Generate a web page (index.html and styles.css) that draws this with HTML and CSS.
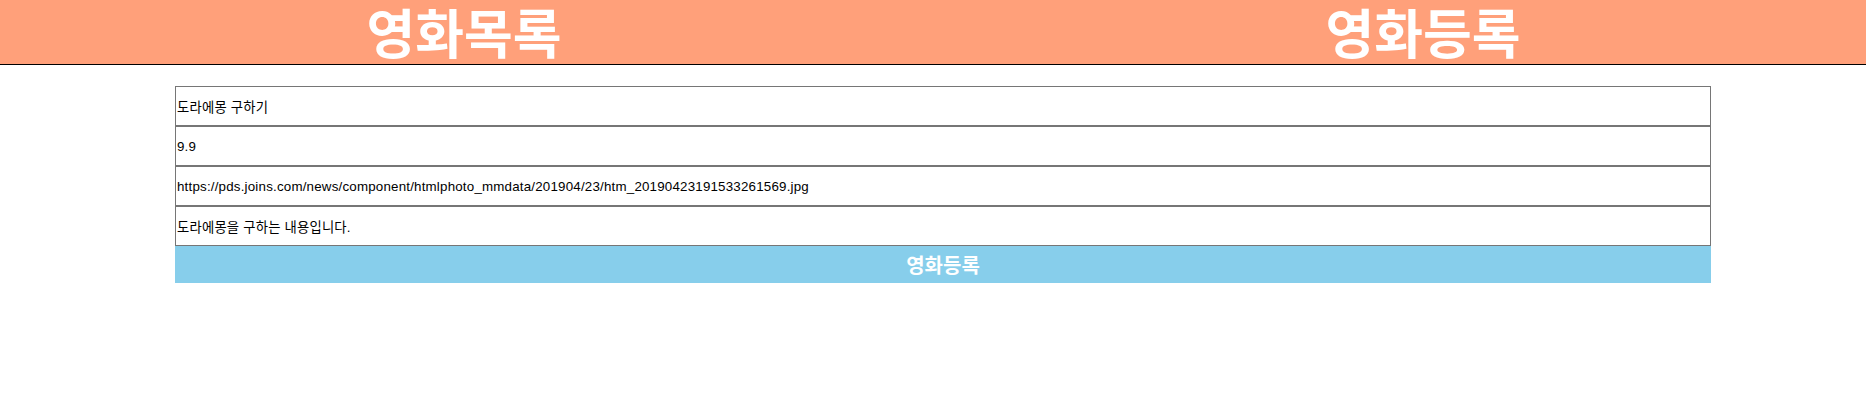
FILE: index.html
```html
<!DOCTYPE html>
<html lang="ko">
<head>
<meta charset="utf-8">
<title>영화등록</title>
<link rel="stylesheet" href="styles.css">
</head>
<body>
<header class="nav">
  <a class="nav-link" href="#">영화목록</a>
  <a class="nav-link" href="#">영화등록</a>
</header>
<form class="movie-form">
  <input class="field" type="text" value="도라에몽 구하기">
  <input class="field" type="text" value="9.9">
  <input class="field" type="text" value="https://pds.joins.com/news/component/htmlphoto_mmdata/201904/23/htm_20190423191533261569.jpg">
  <input class="field" type="text" value="도라에몽을 구하는 내용입니다.">
  <button class="submit" type="button">영화등록</button>
</form>
</body>
</html>
```

FILE: styles.css
```css
* { box-sizing: border-box; }
html, body {
  margin: 0;
  padding: 0;
  background: #ffffff;
}
body {
  font-family: "Liberation Sans", "Noto Sans CJK KR", sans-serif;
}
.nav {
  display: flex;
  align-items: flex-start;
  height: 65px;
  padding-left: 358px;
  gap: 747px;
  background: #ffa07a;
  border-bottom: 1px solid #000000;
}
.nav-link {
  display: block;
  width: 212px;
  text-align: center;
  color: #ffffff;
  text-decoration: none;
  font-family: "Noto Sans CJK KR", sans-serif;
  font-weight: 700;
  font-size: 53px;
  line-height: 62px;
  white-space: nowrap;
}
.movie-form {
  display: flex;
  flex-direction: column;
  width: 1536px;
  margin: 21px 0 0 175px;
}
.field {
  display: block;
  width: 100%;
  height: 40px;
  margin: 0;
  padding: 1px;
  border: 1px solid #767676;
  font-family: "Liberation Sans", "Noto Sans CJK KR", sans-serif;
  font-size: 13.33px;
  letter-spacing: 0.2px;
  color: #000000;
  background: #ffffff;
}
.submit {
  display: block;
  width: 100%;
  height: 37px;
  margin: 0;
  padding: 0;
  border: none;
  background: #87ceeb;
  color: #ffffff;
  font-family: "Noto Sans CJK KR", sans-serif;
  font-weight: 700;
  font-size: 20px;
}
```
